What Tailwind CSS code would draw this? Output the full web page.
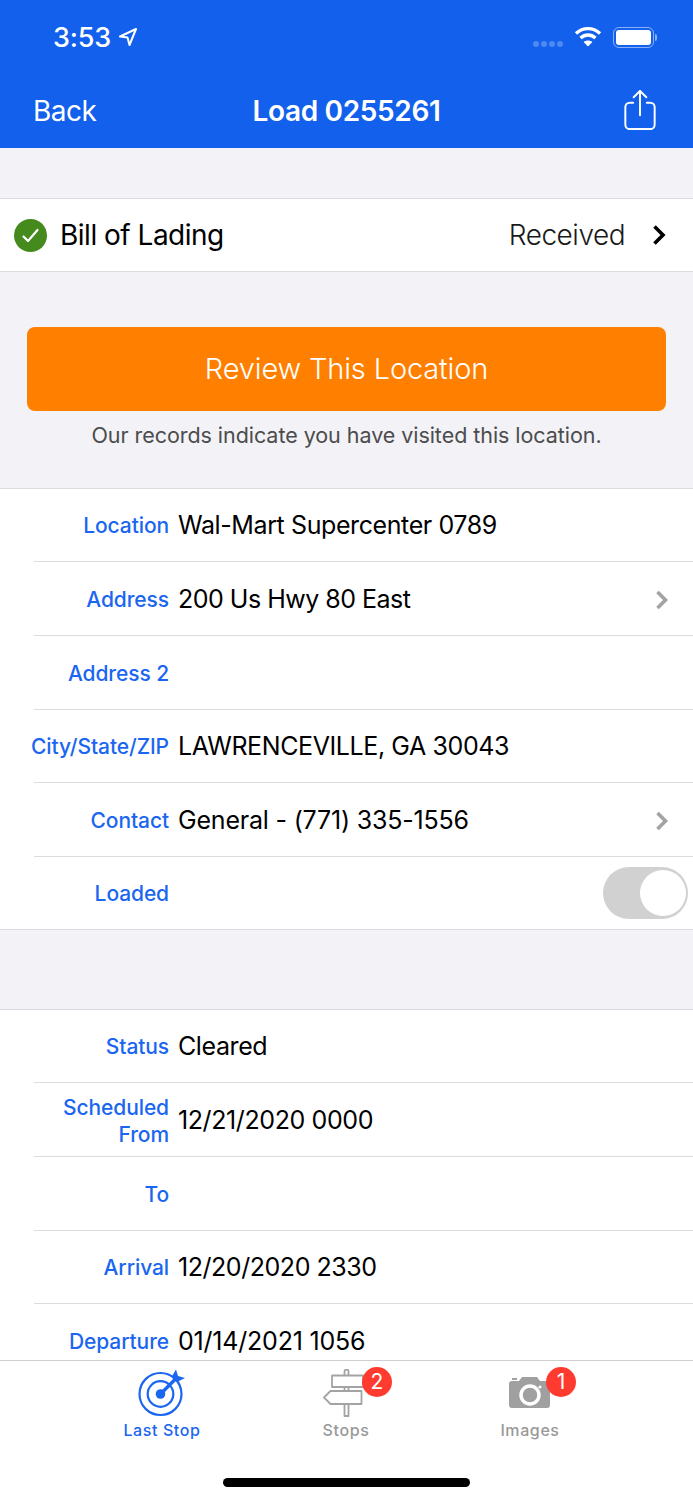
<!DOCTYPE html>
<html><head><meta charset="utf-8"><script src="https://cdn.jsdelivr.net/npm/@tailwindcss/browser@4"></script></head>
<body class="m-0">
<div class="w-[693px] h-[1500px] flex flex-col overflow-hidden bg-[#f2f2f7] font-['Inter','Liberation_Sans',sans-serif] relative">
  <header class="h-[148px] shrink-0 bg-[#1360ed] text-white flex flex-col">
    <div class="h-[74px] flex items-center pl-[53px] pr-[36px]">
      <span class="text-[27px] font-medium leading-none tracking-[-0.2px]">3:53</span>
      <svg class="ml-[7px]" width="20" height="20" viewBox="0 0 20 20" fill="none" stroke="white" stroke-width="2" stroke-linejoin="round"><path d="M18 2 2 9.500l7.500 1L11.500 18z"/></svg>
      <div class="ml-auto flex items-center">
        <div class="flex gap-[2px] mt-[13px] mr-[11px]"><i class="w-[6px] h-[6px] rounded-full bg-white/25"></i><i class="w-[6px] h-[6px] rounded-full bg-white/25"></i><i class="w-[6px] h-[6px] rounded-full bg-white/25"></i><i class="w-[6px] h-[6px] rounded-full bg-white/25"></i></div>
        <svg width="28" height="22" viewBox="0 0 28 22" fill="none" stroke="white" stroke-width="3.400"><path d="M2 7.500C9 1 19 1 26 7.500"/><path d="M6.500 12C11 8 17 8 21.500 12"/><path d="M14 20.500 9.600 16C12 14 16 14 18.400 16z" fill="white" stroke="none"/></svg>
        <div class="ml-[11px] w-[41px] h-[21px] rounded-[6px] border-[1.5px] border-white/50 p-[2px]"><div class="w-full h-full rounded-[3px] bg-white"></div></div>
        <div class="w-[2px] h-[7px] ml-[1px] rounded-r bg-white/50"></div>
      </div>
    </div>
    <div class="h-[74px] relative flex items-center justify-center">
      <span class="absolute left-[33px] top-[19px] text-[28px] leading-[36px] tracking-[-0.5px]">Back</span>
      <span class="text-[28px] font-semibold leading-[36px] tracking-[-0.35px] mt-[-1px]">Load 0255261</span>
      <svg class="absolute left-[623px] top-[14px]" width="34" height="43" viewBox="0 0 34 44" fill="none" stroke="white" stroke-width="2" stroke-linecap="round" stroke-linejoin="round"><path d="M10 15H6.500A4.500 4.500 0 0 0 2 19.500V37.500A4.500 4.500 0 0 0 6.500 42H27.500A4.500 4.500 0 0 0 32 37.500V19.500A4.500 4.500 0 0 0 27.500 15H24"/><path d="M17 28V3"/><path d="M10.500 9.500 17 3l6.500 6.500"/></svg>
    </div>
  </header>

  <main class="flex-1 min-h-0 overflow-hidden">
    <div class="h-[50px]"></div>
    <div class="h-[74px] bg-white border-y border-[#dcdce0] flex items-center pl-[14px] pr-[26px]">
      <svg width="33" height="33" viewBox="0 0 33 33"><circle cx="16.500" cy="16.500" r="16.500" fill="#448a1c"/><path d="M9.500 17.500 14 22 23.500 11" fill="none" stroke="white" stroke-width="2.200" stroke-linecap="round" stroke-linejoin="round"/></svg>
      <span class="ml-[13px] text-[28px] text-black leading-none tracking-[-0.5px]">Bill of Lading</span>
      <span class="ml-auto text-[28px] font-light text-[#1a1a1a] leading-none tracking-[-0.5px]">Received</span>
      <svg class="ml-[27px]" width="15" height="22" viewBox="0 0 15 22" fill="none" stroke="black" stroke-width="3.600"><path d="M2.500 2.500 11 11 2.500 19.500"/></svg>
    </div>
    <div class="px-[27px] pt-[55px] h-[216px] flex flex-col items-center">
      <div class="w-full h-[84px] rounded-[8px] bg-[#ff7f00] flex items-center justify-center text-white text-[29px] font-light tracking-[-0.15px]">Review This Location</div>
      <p class="mt-[10px] text-[21.500px] leading-[28px] text-[#4c4c4c] tracking-[-0.05px]">Our records indicate you have visited this location.</p>
    </div>

    <section class="bg-white border-y border-[#dcdce0]">
      <div class="h-[72px] pt-[2px] flex items-center relative">
        <span class="w-[169px] shrink-0 text-right text-[21px] font-medium text-[#1a66f0] tracking-[-0.1px] whitespace-nowrap">Location</span>
        <span class="ml-[9px] text-[25px] text-black tracking-[-0.4px]">Wal-Mart Supercenter 0789</span>
      </div>
      <div class="ml-[34px] h-[74px] pt-[2px] border-t border-[#dcdce0] flex items-center pr-[23px]">
        <span class="w-[135px] shrink-0 text-right text-[21px] font-medium text-[#1a66f0] tracking-[-0.1px] whitespace-nowrap">Address</span>
        <span class="ml-[9px] text-[25px] text-black tracking-[-0.5px]">200 Us Hwy 80 East</span>
        <svg class="ml-auto" width="15" height="20" viewBox="0 0 15 20" fill="none" stroke="#a3a3a3" stroke-width="3.600"><path d="M2.500 2 10.500 10 2.500 18"/></svg>
      </div>
      <div class="ml-[34px] h-[74px] pt-[2px] border-t border-[#dcdce0] flex items-center">
        <span class="w-[135px] shrink-0 text-right text-[21px] font-medium text-[#1a66f0] tracking-[-0.1px] whitespace-nowrap">Address 2</span>
      </div>
      <div class="ml-[34px] h-[73px] pt-[2px] border-t border-[#dcdce0] flex items-center">
        <span class="w-[135px] shrink-0 flex justify-end text-[21px] font-medium text-[#1a66f0] tracking-[-0.1px] whitespace-nowrap">City/State/ZIP</span>
        <span class="ml-[9px] text-[25px] text-black tracking-[-0.4px]">LAWRENCEVILLE, GA 30043</span>
      </div>
      <div class="ml-[34px] h-[74px] pt-[2px] border-t border-[#dcdce0] flex items-center pr-[23px]">
        <span class="w-[135px] shrink-0 text-right text-[21px] font-medium text-[#1a66f0] tracking-[-0.1px] whitespace-nowrap">Contact</span>
        <span class="ml-[9px] text-[25px] text-black tracking-[-0.2px]">General - (771) 335-1556</span>
        <svg class="ml-auto" width="15" height="20" viewBox="0 0 15 20" fill="none" stroke="#a3a3a3" stroke-width="3.600"><path d="M2.500 2 10.500 10 2.500 18"/></svg>
      </div>
      <div class="ml-[34px] h-[73px] pt-[2px] border-t border-[#dcdce0] flex items-center pr-[5px]">
        <span class="w-[135px] shrink-0 text-right text-[21px] font-medium text-[#1a66f0] tracking-[-0.1px] whitespace-nowrap">Loaded</span>
        <div class="ml-auto mt-[-2px] w-[85px] h-[52px] rounded-full bg-[#d1d1d1] flex justify-end items-center p-[2px]"><div class="w-[46px] h-[46px] rounded-full bg-white"></div></div>
      </div>
    </section>

    <div class="h-[79px]"></div>

    <section class="bg-white border-t border-[#dcdce0]">
      <div class="h-[72px] pt-[2px] flex items-center">
        <span class="w-[169px] shrink-0 text-right text-[21px] font-medium text-[#1a66f0] tracking-[-0.1px]">Status</span>
        <span class="ml-[9px] text-[25px] text-black tracking-[-0.4px]">Cleared</span>
      </div>
      <div class="ml-[34px] h-[74px] pt-[2px] border-t border-[#dcdce0] flex items-center">
        <span class="w-[135px] shrink-0 text-right text-[21px] leading-[27px] font-medium text-[#1a66f0] tracking-[-0.1px]">Scheduled From</span>
        <span class="ml-[9px] text-[25px] text-black tracking-[-0.4px]">12/21/2020 0000</span>
      </div>
      <div class="ml-[34px] h-[74px] pt-[2px] border-t border-[#dcdce0] flex items-center">
        <span class="w-[135px] shrink-0 text-right text-[21px] font-medium text-[#1a66f0] tracking-[-0.1px]">To</span>
      </div>
      <div class="ml-[34px] h-[73px] pt-[2px] border-t border-[#dcdce0] flex items-center">
        <span class="w-[135px] shrink-0 text-right text-[21px] font-medium text-[#1a66f0] tracking-[-0.1px]">Arrival</span>
        <span class="ml-[9px] text-[25px] text-black tracking-[-0.45px]">12/20/2020 2330</span>
      </div>
      <div class="ml-[34px] h-[74px] pt-[2px] border-t border-[#dcdce0] flex items-center">
        <span class="w-[135px] shrink-0 text-right text-[21px] font-medium text-[#1a66f0] tracking-[-0.1px]">Departure</span>
        <span class="ml-[9px] text-[25px] text-black tracking-[-0.2px]">01/14/2021 1056</span>
      </div>
    </section>
  </main>

  <nav class="h-[140px] shrink-0 bg-white border-t border-[#cfcfcf] relative">
    <div class="grid grid-cols-[184px_184px_184px] pl-[70px] pt-[8px]">
      <div class="flex flex-col items-center text-[#1a66f0]">
        <svg width="48" height="48" viewBox="0 0 48 48" fill="none" stroke="#1a66f0">
          <circle cx="22.500" cy="25" r="21" stroke-width="2.200"/><circle cx="22.500" cy="25" r="12.800" stroke-width="2.200"/><circle cx="22.500" cy="25" r="4.800" fill="#1a66f0" stroke="none"/>
          <path d="M22.500 25 37 10.500" stroke-width="3.400"/><path d="M38 0.500l2 6.500 7 2-7 3.500-2.500-.5-4-4z" fill="#1a66f0" stroke="none"/>
        </svg>
        <span class="text-[16px] font-medium tracking-[0.6px] leading-[20px] mt-[3px]">Last Stop</span>
      </div>
      <div class="flex flex-col items-center text-[#999999] relative">
        <svg width="48" height="48" viewBox="0 0 48 48" fill="none" stroke="#a3a3a3" stroke-width="1.800" stroke-linejoin="round">
          <path d="M22.500 6V2.500a2 2 0 0 1 4 0V6M22.500 22v-4h4v4M22.500 35v12h4V35"/>
          <path d="M10 6.500H41v11.500H10z"/><path d="M2 28.500 8.500 22H39.500v13H8.500z"/>
        </svg>
        <span class="text-[16px] font-medium tracking-[0.6px] leading-[20px] mt-[3px]">Stops</span>
        <span class="absolute left-[108px] top-[-2px] w-[30px] h-[30px] rounded-full bg-[#ff3b30] text-white text-[21px] leading-[30px] text-center">2</span>
      </div>
      <div class="flex flex-col items-center text-[#999999] relative">
        <svg width="48" height="48" viewBox="0 0 48 48">
          <path d="M6 12H13L16 8H31L34 12H41a3 3 0 0 1 3 3V36a3 3 0 0 1-3 3H6a3 3 0 0 1-3-3V15a3 3 0 0 1 3-3z" fill="#a0a0a0"/><rect x="6" y="9" width="5" height="2" fill="#a0a0a0"/>
          <circle cx="24" cy="26" r="9" fill="none" stroke="white" stroke-width="3.500"/><circle cx="34" cy="18" r="1.500" fill="white"/>
        </svg>
        <span class="text-[16px] font-medium tracking-[0.6px] leading-[20px] mt-[3px]">Images</span>
        <span class="absolute left-[108px] top-[-2px] w-[30px] h-[30px] rounded-full bg-[#ff3b30] text-white text-[21px] leading-[30px] text-center">1</span>
      </div>
    </div>
    <div class="absolute left-[223px] top-[117px] w-[247px] h-[9px] rounded-full bg-black"></div>
  </nav>
</div>
</body></html>
